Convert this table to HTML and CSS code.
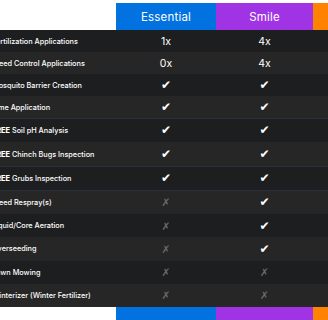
FILE: index.html
```html
<!DOCTYPE html>
<html>
<head>
<meta charset="utf-8">
<link rel="stylesheet" href="styles.css">
</head>
<body>
<div class="table">
  <div class="head">
    <div class="hcell blank"></div>
    <div class="hcell essential">Essential</div>
    <div class="hcell smile">Smile</div>
    <div class="hcell premium"></div>
  </div>
  <div class="row r22 dark"><div class="label"><span>Fertilization Applications</span></div><div class="val num">1x</div><div class="val num">4x</div><div class="val"></div></div>
  <div class="row r22 light"><div class="label"><span>Weed Control Applications</span></div><div class="val num">0x</div><div class="val num">4x</div><div class="val"></div></div>
  <div class="row r22 dark"><div class="label"><span>Mosquito Barrier Creation</span></div><div class="val yes">✔</div><div class="val yes">✔</div><div class="val"></div></div>
  <div class="row r22 light"><div class="label"><span>Lime Application</span></div><div class="val yes">✔</div><div class="val yes">✔</div><div class="val"></div></div>
  <div class="row r24 dark line"><div class="label"><span><b>FREE</b> Soil pH Analysis</span></div><div class="val yes">✔</div><div class="val yes">✔</div><div class="val"></div></div>
  <div class="row r24 light"><div class="label"><span><b>FREE</b> Chinch Bugs Inspection</span></div><div class="val yes">✔</div><div class="val yes">✔</div><div class="val"></div></div>
  <div class="row r24 dark line"><div class="label"><span><b>FREE</b> Grubs Inspection</span></div><div class="val yes">✔</div><div class="val yes">✔</div><div class="val"></div></div>
  <div class="row r24 light line"><div class="label"><span>Weed Respray(s)</span></div><div class="val no">✗</div><div class="val yes">✔</div><div class="val"></div></div>
  <div class="row r23 dark"><div class="label"><span>Liquid/Core Aeration</span></div><div class="val no">✗</div><div class="val yes">✔</div><div class="val"></div></div>
  <div class="row r23 light"><div class="label"><span>Overseeding</span></div><div class="val no">✗</div><div class="val yes">✔</div><div class="val"></div></div>
  <div class="row r23 dark"><div class="label"><span>Lawn Mowing</span></div><div class="val no">✗</div><div class="val no">✗</div><div class="val"></div></div>
  <div class="row r23 light"><div class="label"><span>Winterizer (Winter Fertilizer)</span></div><div class="val no">✗</div><div class="val no">✗</div><div class="val"></div></div>
  <div class="foot">
    <div class="fcell blank"></div>
    <div class="fcell essential"></div>
    <div class="fcell smile"></div>
    <div class="fcell premium"></div>
  </div>
</div>
</body>
</html>
```
FILE: styles.css
```css
html, body {
  margin: 0;
  padding: 0;
  background: #ffffff;
  overflow: hidden;
}
body {
  width: 328px;
  height: 320px;
  font-family: Inter, "Noto Sans", sans-serif;
}
.table {
  margin-left: -10px;
  width: 400px;
  padding-top: 3px;
}
.head, .row, .foot {
  display: grid;
  grid-template-columns: 126px 100px 97px 77px;
}
.hcell {
  height: 27px;
  display: flex;
  align-items: center;
  justify-content: center;
  color: #ffffff;
  font-size: 11.5px;
  font-weight: 400;
  letter-spacing: 0.2px;
}
.blank { background: #ffffff; }
.essential { background: #0272e0; }
.smile { background: #a033e4; }
.premium { background: #ff8300; }
.row { color: #ffffff; }
.r22 { height: 22px; }
.r24 { height: 24px; }
.r23 { height: 23.25px; }
.dark { background: #1d1e20; }
.light { background: #262626; }
.line { box-shadow: inset 0 1px 0 #2b303c; }
.label {
  display: flex;
  align-items: center;
  padding-left: 2px;
  font-size: 7.3px;
  font-weight: 500;
  white-space: nowrap;
}
.label b { font-weight: 800; }
.val {
  display: flex;
  align-items: center;
  justify-content: center;
}
.num { font-size: 10.5px; font-weight: 400; }
.yes { font-family: "DejaVu Sans", sans-serif; font-size: 12px; color: #ffffff; }
.no { font-family: "DejaVu Sans", sans-serif; font-size: 10.5px; color: #6a6a6a; }
.fcell { height: 14px; }
```
